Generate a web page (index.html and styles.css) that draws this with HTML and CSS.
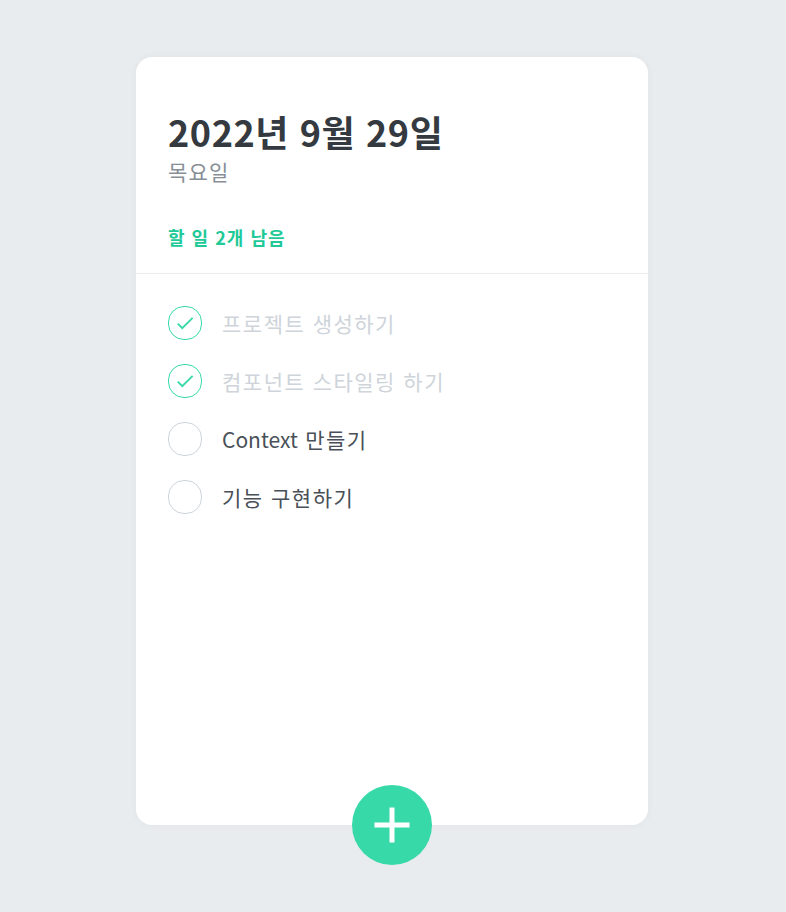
FILE: index.html
```html
<!DOCTYPE html>
<html lang="ko">
<head>
  <meta charset="UTF-8">
  <title>할 일</title>
  <link rel="stylesheet" href="styles.css">
</head>
<body>
  <div class="template">
    <div class="head">
      <h1>2022년 9월 29일</h1>
      <div class="day">목요일</div>
      <div class="tasks-left">할 일 2개 남음</div>
    </div>

    <div class="list">
      <div class="item">
        <div class="circle done">
          <svg viewBox="0 0 24 24" width="22" height="22"><path d="M9 16.2 4.8 12l-1.4 1.4L9 19 21 7l-1.4-1.4L9 16.2z" fill="currentColor"/></svg>
        </div>
        <div class="text done">프로젝트 생성하기</div>
      </div>
      <div class="item">
        <div class="circle done">
          <svg viewBox="0 0 24 24" width="22" height="22"><path d="M9 16.2 4.8 12l-1.4 1.4L9 19 21 7l-1.4-1.4L9 16.2z" fill="currentColor"/></svg>
        </div>
        <div class="text done">컴포넌트 스타일링 하기</div>
      </div>
      <div class="item">
        <div class="circle"></div>
        <div class="text"><span class="latin">Context</span> 만들기</div>
      </div>
      <div class="item">
        <div class="circle"></div>
        <div class="text">기능 구현하기</div>
      </div>
    </div>

    <button class="create" aria-label="추가">
      <svg viewBox="0 0 24 24" width="60" height="60"><path d="M19 13h-6v6h-2v-6H5v-2h6V5h2v6h6v2z" fill="currentColor"/></svg>
    </button>
  </div>
</body>
</html>
```

FILE: styles.css
```css
body {
  margin: 0;
  padding: 1px 2px 0 0;
  background: #e9ecef;
  font-family: "Noto Sans CJK KR", "Noto Sans", sans-serif;
}

.template {
  width: 512px;
  height: 768px;
  position: relative;
  background: white;
  border-radius: 16px;
  box-shadow: 0 0 8px 0 rgba(0, 0, 0, 0.04);
  margin: 56px auto 48px;
  display: flex;
  flex-direction: column;
}

.head {
  padding: 48px 32px 24px;
  border-bottom: 1px solid #e9ecef;
}
.head h1 {
  margin: 0;
  font-size: 36px;
  line-height: 52px;
  letter-spacing: 0.6px;
  color: #343a40;
}
.day {
  color: #868e96;
  font-size: 21px;
  line-height: 28px;
  letter-spacing: 1.2px;
}
.tasks-left {
  color: #20c997;
  font-size: 18px;
  font-weight: bold;
  margin-top: 40px;
  line-height: 24px;
  letter-spacing: 1px;
}

.list {
  flex: 1;
  padding: 20px 32px 48px;
}
.item {
  display: flex;
  align-items: center;
  padding: 12px 0;
}
.circle {
  width: 32px;
  height: 32px;
  border-radius: 16px;
  border: 1px solid #ced4da;
  margin-right: 20px;
  display: flex;
  align-items: center;
  justify-content: center;
}
.circle.done {
  border-color: #38d9a9;
  color: #38d9a9;
}
.text {
  flex: 1;
  font-size: 21px;
  letter-spacing: 1.5px;
  color: #495057;
}
.text.done {
  color: #ced4da;
}
.latin {
  letter-spacing: 0;
}

.create {
  background: #38d9a9;
  width: 80px;
  height: 80px;
  border-radius: 40px;
  border: none;
  padding: 0;
  color: white;
  display: flex;
  align-items: center;
  justify-content: center;
  position: absolute;
  left: 50%;
  bottom: -40px;
  margin-left: -40px;
  cursor: pointer;
}
```
